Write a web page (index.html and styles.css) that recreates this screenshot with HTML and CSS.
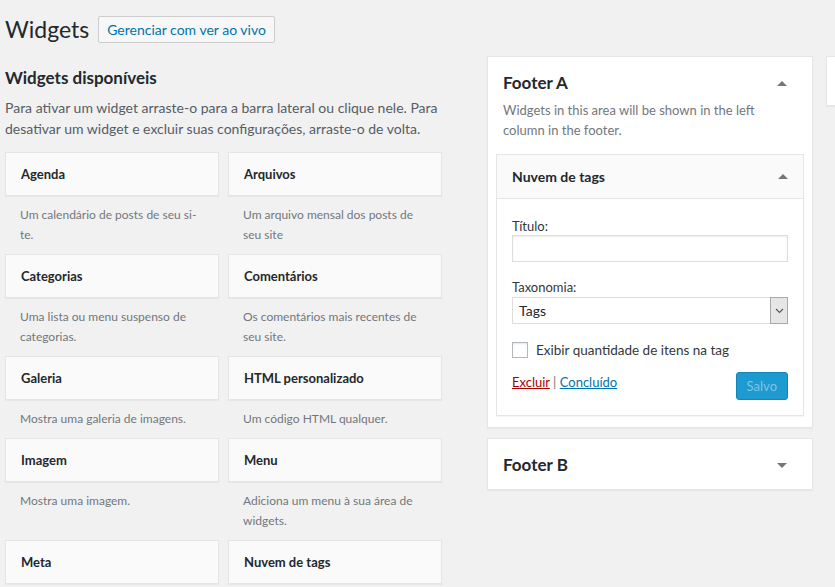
FILE: index.html
```html
<!DOCTYPE html>
<html lang="pt-BR">
<head>
  <meta charset="UTF-8" />
  <title>Widgets</title>
  <link rel="stylesheet" href="styles.css">
</head>
<body>
  <div class="wrap">
    <div class="page-head">
      <h1>Widgets</h1>
      <a class="page-action" href="#">Gerenciar com ver ao vivo</a>
    </div>

    <div class="columns">
      <div class="widgets-left">
        <h2>Widgets disponíveis</h2>
        <p class="intro">Para ativar um widget arraste-o para a barra lateral ou clique nele. Para desativar um widget e excluir suas configurações, arraste-o de volta.</p>

        <div class="widget-list">
          <div class="widget">
            <div class="widget-top">Agenda</div>
            <div class="widget-desc">Um calendário de posts de seu si-<br>te.</div>
          </div>
          <div class="widget">
            <div class="widget-top">Arquivos</div>
            <div class="widget-desc">Um arquivo mensal dos posts de seu site</div>
          </div>
          <div class="widget">
            <div class="widget-top">Categorias</div>
            <div class="widget-desc">Uma lista ou menu suspenso de categorias.</div>
          </div>
          <div class="widget">
            <div class="widget-top">Comentários</div>
            <div class="widget-desc">Os comentários mais recentes de seu site.</div>
          </div>
          <div class="widget">
            <div class="widget-top">Galeria</div>
            <div class="widget-desc">Mostra uma galeria de imagens.</div>
          </div>
          <div class="widget">
            <div class="widget-top">HTML personalizado</div>
            <div class="widget-desc">Um código HTML qualquer.</div>
          </div>
          <div class="widget">
            <div class="widget-top">Imagem</div>
            <div class="widget-desc">Mostra uma imagem.</div>
          </div>
          <div class="widget">
            <div class="widget-top">Menu</div>
            <div class="widget-desc">Adiciona um menu à sua área de widgets.</div>
          </div>
          <div class="widget">
            <div class="widget-top">Meta</div>
            <div class="widget-desc"></div>
          </div>
          <div class="widget">
            <div class="widget-top">Nuvem de tags</div>
            <div class="widget-desc"></div>
          </div>
        </div>
      </div>

      <div class="widgets-right">
        <div class="sidebars-col">
          <div class="sidebar">
            <div class="sidebar-head">
              <h2>Footer A</h2>
              <span class="arrow up"></span>
            </div>
            <p class="sidebar-desc">Widgets in this area will be shown in the left column in the footer.</p>

            <div class="open-widget">
              <div class="open-widget-top">
                <span>Nuvem de tags</span>
                <span class="arrow up"></span>
              </div>
              <div class="open-widget-inside">
                <label class="field-label">Título:</label>
                <input class="text-input" type="text">

                <label class="field-label second">Taxonomia:</label>
                <div class="select">
                  <span class="select-value">Tags</span>
                  <span class="select-arrow">
                    <svg width="9" height="6" viewBox="0 0 9 6"><path d="M1 1 L4.5 4.5 L8 1" fill="none" stroke="#555" stroke-width="1.1"/></svg>
                  </span>
                </div>

                <label class="check-row">
                  <input class="checkbox" type="checkbox">
                  <span>Exibir quantidade de itens na tag</span>
                </label>

                <div class="widget-actions">
                  <div class="links">
                    <a class="delete" href="#">Excluir</a> | <a class="done" href="#">Concluído</a>
                  </div>
                  <button class="save" disabled>Salvo</button>
                </div>
              </div>
            </div>
          </div>

          <div class="sidebar closed">
            <div class="sidebar-head">
              <h2>Footer B</h2>
              <span class="arrow down"></span>
            </div>
          </div>
        </div>

        <div class="sidebars-col">
          <div class="sidebar stub"></div>
        </div>
      </div>
    </div>
  </div>
</body>
</html>
```

FILE: styles.css
```css
* {
  box-sizing: border-box;
}

html, body {
  margin: 0;
  background: #f1f1f1;
  overflow: hidden;
}

body {
  font-family: 'Lato', 'Liberation Sans', sans-serif;
  font-size: 14px;
  color: #23282d;
  width: 835px;
  height: 587px;
}

.wrap {
  padding-left: 5px;
}

.page-head {
  display: flex;
  align-items: center;
  gap: 9px;
  padding-top: 15px;
}

h1 {
  margin: 0;
  font-size: 23px;
  font-weight: 400;
  line-height: 29px;
  color: #23282d;
}

.page-action {
  display: inline-block;
  height: 27px;
  line-height: 25px;
  padding: 0 8px;
  border: 1px solid #ccc;
  border-radius: 2px;
  background: #f7f7f7;
  color: #0073aa;
  text-decoration: none;
  font-size: 14px;
  margin-top: -1px;
}

.columns {
  display: flex;
  gap: 45px;
}

.widgets-left {
  width: 437px;
  flex-shrink: 0;
}

.widgets-left h2 {
  margin: 22px 0 0;
  font-size: 17px;
  font-weight: 700;
  line-height: 24px;
}

.intro {
  margin: 7px 0 0;
  line-height: 21px;
  color: #555d66;
}

.widget-list {
  display: grid;
  grid-template-columns: 214px 214px;
  column-gap: 9px;
  margin-top: 13px;
}

.widget-top {
  height: 44px;
  line-height: 42px;
  padding: 0 15px;
  background: #fafafa;
  border: 1px solid #e5e5e5;
  font-size: 13px;
  font-weight: 700;
  box-shadow: 0 1px 1px rgba(0,0,0,0.04);
}

.widget-desc {
  padding: 9px 15px;
  font-size: 12px;
  line-height: 20px;
  color: #72777c;
  min-height: 38px;
}

.widgets-right {
  display: flex;
  gap: 13px;
  padding-top: 12px;
}

.sidebars-col {
  width: 326px;
  flex-shrink: 0;
}

.sidebar {
  background: #fff;
  border: 1px solid #e5e5e5;
  box-shadow: 0 1px 1px rgba(0,0,0,0.04);
  margin-bottom: 10px;
  padding-bottom: 11px;
}

.sidebar.closed {
  padding-bottom: 0;
}

.sidebar.stub {
  height: 50px;
}

.sidebar-head {
  display: flex;
  align-items: center;
  justify-content: space-between;
  padding: 14px 25px 0 15px;
}

.sidebar.closed .sidebar-head {
  padding-bottom: 12px;
}

.sidebar-head h2 {
  margin: 0;
  font-size: 17px;
  font-weight: 700;
  line-height: 24px;
}

.arrow {
  width: 0;
  height: 0;
  border-left: 5px solid transparent;
  border-right: 5px solid transparent;
}

.arrow.up {
  border-bottom: 5px solid #72777c;
}

.arrow.down {
  border-top: 5px solid #72777c;
}

.sidebar-desc {
  margin: 5px 0 0;
  padding: 0 15px;
  font-size: 13px;
  line-height: 20px;
  color: #72777c;
}

.open-widget {
  margin: 14px 8px 0;
  border: 1px solid #e5e5e5;
  box-shadow: 0 1px 1px rgba(0,0,0,0.04);
}

.open-widget-top {
  display: flex;
  align-items: center;
  justify-content: space-between;
  height: 44px;
  padding: 0 15px;
  background: #fafafa;
  border-bottom: 1px solid #e5e5e5;
  font-size: 14px;
  font-weight: 700;
}

.open-widget-inside {
  display: flex;
  flex-direction: column;
  padding: 17px 15px 15px;
  font-size: 13px;
}

.field-label {
  line-height: 20px;
  color: #32373c;
}

.field-label.second {
  margin-top: 15px;
}

.text-input {
  height: 27px;
  margin: -1px 0 0;
  border: 1px solid #ddd;
  box-shadow: inset 0 1px 2px rgba(0,0,0,0.07);
  background: #fff;
}

.select {
  display: flex;
  height: 27px;
  border: 1px solid #ddd;
  background: #fff;
}

.select-value {
  flex: 1;
  padding-left: 6px;
  line-height: 25px;
  font-size: 14px;
}

.select-arrow {
  width: 18px;
  display: flex;
  align-items: center;
  justify-content: center;
  background: #e6e6e6;
  border: 1px solid #a9a9a9;
  margin: -1px -1px -1px 0;
}

.check-row {
  display: flex;
  align-items: center;
  gap: 8px;
  height: 20px;
  margin-top: 16px;
  font-size: 13.5px;
  color: #32373c;
}

.checkbox {
  appearance: none;
  width: 16px;
  height: 16px;
  margin: 0;
  border: 1px solid #b4b9be;
  background: #fff;
  box-shadow: inset 0 1px 2px rgba(0,0,0,0.1);
}

.widget-actions {
  display: flex;
  justify-content: space-between;
  align-items: flex-start;
  margin-top: 12px;
}

.links {
  line-height: 20px;
  color: #72777c;
}

.links a {
  text-decoration: underline;
}

.delete {
  color: #a00;
}

.done {
  color: #0073aa;
}

.save {
  height: 28px;
  padding: 0 10px;
  border: 1px solid #1285b8;
  border-radius: 3px;
  background: #1d9ad0;
  color: #7fc4e3;
  font-family: inherit;
  font-size: 13px;
}
```
